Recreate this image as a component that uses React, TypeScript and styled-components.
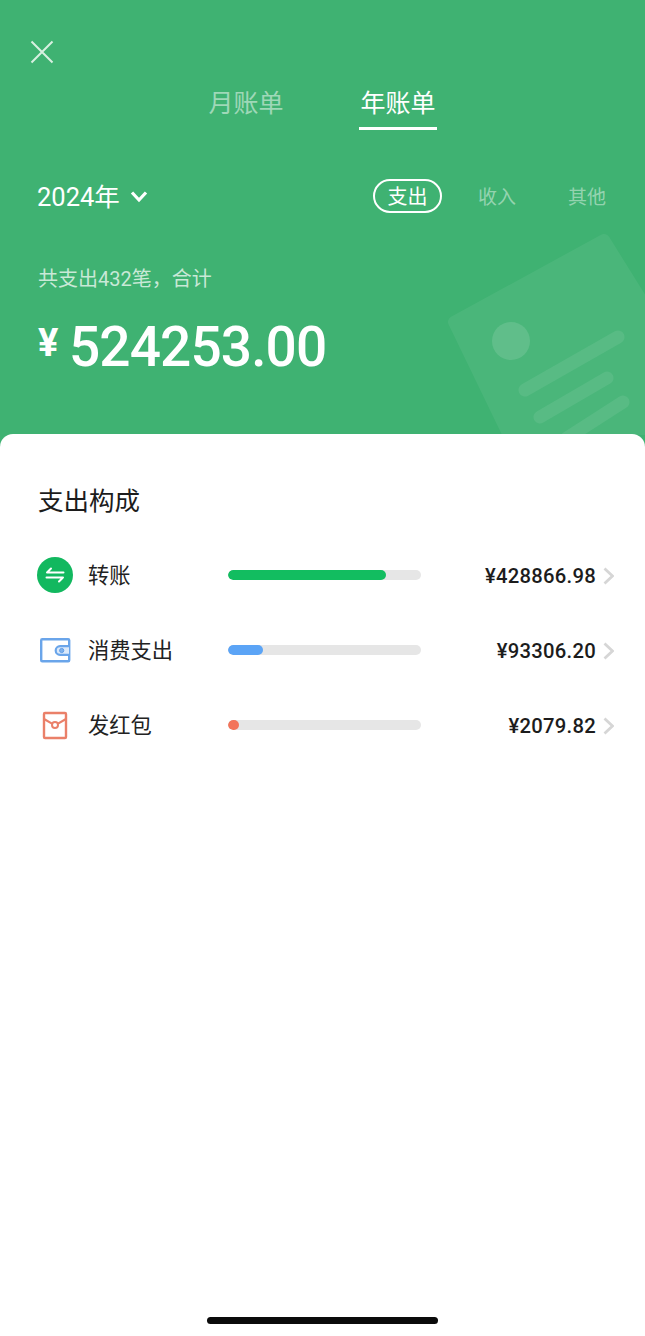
import React, { FunctionComponent } from 'react';
import styled, { createGlobalStyle } from 'styled-components';

const GlobalStyle = createGlobalStyle`
  html, body {
    margin: 0;
    padding: 0;
    background: #fff;
  }
  body {
    font-family: "Noto Sans CJK SC", "Noto Sans", sans-serif;
  }
`;

const Page = styled.div`
  width: 645px;
  height: 1336px;
  display: flex;
  flex-direction: column;
  overflow: hidden;
  background: #3fb272;
`;

const Header = styled.header`
  position: relative;
  height: 435px;
  flex: none;
  box-sizing: border-box;
  padding: 40px 38px 0 37px;
  color: #fff;
  overflow: hidden;
`;

const Decoration = styled.svg`
  position: absolute;
  left: 0;
  top: 0;
  pointer-events: none;
`;

const CloseButton = styled.div`
  width: 24px;
  height: 24px;
  margin-left: -7px;
  line-height: 0;
`;

const Tabs = styled.div`
  display: flex;
  justify-content: center;
  gap: 75px;
  margin: 14px -1px 0 0;
  height: 52px;
`;

const Tab = styled.div<{ $active?: boolean }>`
  width: ${p => (p.$active ? '78px' : '76px')};
  height: 52px;
  box-sizing: border-box;
  font-size: 25px;
  line-height: 46px;
  text-align: center;
  white-space: nowrap;
  color: ${p => (p.$active ? '#fff' : 'rgba(255, 255, 255, 0.5)')};
  border-bottom: 3px solid ${p => (p.$active ? '#fff' : 'transparent')};
`;

const FilterRow = styled.div`
  display: flex;
  align-items: center;
  justify-content: space-between;
  height: 34px;
  margin-top: 49px;
`;

const YearPicker = styled.div`
  display: flex;
  align-items: center;
  gap: 10px;
  font-size: 25.5px;
  line-height: 30px;
  height: 34px;
`;

const YearDigits = styled.span`
  font-family: "Roboto", "Noto Sans CJK SC", sans-serif;
`;

const Kinds = styled.div`
  display: flex;
  align-items: center;
  margin-right: 1px;
`;

const ActiveKind = styled.div`
  box-sizing: border-box;
  width: 69px;
  height: 34px;
  font-size: 20px;
  line-height: 30px;
  text-align: center;
  color: #fff;
  border: 2px solid #fff;
  border-radius: 17px;
`;

const PlainKind = styled.div`
  height: 34px;
  margin-left: 36px;
  font-size: 19px;
  line-height: 34px;
  color: rgba(255, 255, 255, 0.45);
  & + & {
    margin-left: 52px;
  }
`;

const Summary = styled.div`
  margin: 51px 0 0 1px;
  font-size: 20px;
  line-height: 30px;
  color: rgba(255, 255, 255, 0.72);
  font-family: "Roboto", "Noto Sans CJK SC", sans-serif;
`;

const Amount = styled.div`
  display: flex;
  align-items: flex-start;
  margin: 23px 0 0 1px;
  font-family: "Roboto", sans-serif;
  font-weight: 500;
  color: #fff;
`;

const Currency = styled.span`
  font-size: 38px;
  line-height: 52px;
  width: 31px;
  font-weight: 700;
`;

const AmountValue = styled.span`
  font-size: 55px;
  line-height: 60px;
  letter-spacing: -0.9px;
`;

const Sheet = styled.main`
  flex: 1;
  display: flex;
  flex-direction: column;
  background: #fff;
  border-radius: 13px 13px 0 0;
  margin-top: -1px;
  padding: 0 0 12px;
`;

const SheetTitle = styled.h2`
  margin: 47px 0 0 38px;
  font-size: 25.5px;
  line-height: 36px;
  font-weight: 400;
  color: #1c1c1c;
`;

const Rows = styled.div`
  display: flex;
  flex-direction: column;
  margin-top: 20px;
`;

const Row = styled.div`
  display: grid;
  grid-template-columns: 51px 140px 193px 175px 18px;
  align-items: center;
  height: 75px;
  padding-left: 37px;
`;

const IconCell = styled.div`
  width: 36px;
  height: 36px;
  line-height: 0;
`;

const Label = styled.div`
  font-size: 21.25px;
  line-height: 30px;
  padding-bottom: 2px;
  color: #222;
  white-space: nowrap;
`;

const BarTrack = styled.div`
  height: 10px;
  background: #e6e6e6;
  border-radius: 5px;
  overflow: hidden;
`;

const BarFill = styled.div<{ $color: string }>`
  height: 100%;
  background: ${p => p.$color};
  border-radius: 5px;
`;

const Value = styled.div`
  font-family: "Roboto", sans-serif;
  font-size: 20.25px;
  line-height: 30px;
  padding-top: 2px;
  font-weight: 500;
  text-align: right;
  color: #1c1c1c;
  letter-spacing: 0.25px;
`;

const Chevron = styled.div`
  line-height: 0;
  padding: 2px 0 0 7px;
`;

const HomeIndicator = styled.div`
  width: 231px;
  height: 7px;
  margin: auto auto 0;
  background: #0a0a0a;
  border-radius: 4px;
`;

const TransferIcon = () => (
  <svg width="36" height="36" viewBox="0 0 36 36">
    <circle cx="18" cy="18" r="18" fill="#12b85f" />
    <path d="M10 15.5h16.5M14 11.5l-4 4M9.5 20.5h16.5M26 20.5l-4 4" stroke="#fff" strokeWidth="2" fill="none" strokeLinecap="round" />
  </svg>
);

const WalletIcon = () => (
  <svg width="36" height="36" viewBox="0 0 36 36">
    <rect x="4.2" y="7.2" width="28" height="22" rx="1" fill="none" stroke="#6aa5ea" strokeWidth="2.4" />
    <path d="M32 14.2h-9a4 4 0 0 0 0 8.6h9" fill="#dbe9fa" stroke="#6aa5ea" strokeWidth="2.2" />
    <circle cx="24.7" cy="18.5" r="2.1" fill="#7fb1ec" stroke="#5f9de6" strokeWidth="1" />
  </svg>
);

const RedPacketIcon = () => (
  <svg width="36" height="36" viewBox="0 0 36 36">
    <rect x="7" y="6" width="22" height="25" rx="1" fill="none" stroke="#ea8069" strokeWidth="2.4" />
    <path d="M7 12l8 4.6M29 12l-8 4.6" fill="none" stroke="#ea8069" strokeWidth="2.2" />
    <circle cx="18" cy="18" r="3" fill="none" stroke="#ea8069" strokeWidth="2" />
  </svg>
);

const RowChevron = () => (
  <svg width="11" height="18" viewBox="0 0 11 18">
    <path d="M1.5 1.5L9.5 9l-8 7.5" fill="none" stroke="#d6d6d6" strokeWidth="2.8" />
  </svg>
);

interface Expense {
  label: string;
  amount: string;
  percent: number;
  color: string;
  icon: React.ReactNode;
}

const expenses: Expense[] = [
  { label: '转账', amount: '¥428866.98', percent: 82, color: '#12bd60', icon: <TransferIcon /> },
  { label: '消费支出', amount: '¥93306.20', percent: 18, color: '#5ba4f6', icon: <WalletIcon /> },
  { label: '发红包', amount: '¥2079.82', percent: 5.5, color: '#f2745a', icon: <RedPacketIcon /> },
];

const App: FunctionComponent = () => (
  <Page>
    <GlobalStyle />
    <Header>
      <Decoration width="645" height="435" viewBox="0 0 645 435">
        <g opacity="0.055">
          <path
            d="M454 322L604 240L660 330L660 450L516 450Z"
            fill="#fff"
            stroke="#fff"
            strokeWidth="12"
            strokeLinejoin="round"
          />
        </g>
        <circle cx="511" cy="341" r="19" fill="#fff" fillOpacity="0.12" />
        <path
          d="M525 390L618 337M540 417L607 378M567 438L623 402"
          stroke="#fff"
          strokeOpacity="0.08"
          strokeWidth="13"
          strokeLinecap="round"
        />
      </Decoration>
      <CloseButton>
        <svg width="24" height="24" viewBox="0 0 24 24">
          <path d="M1.5 1.5l21 21M22.5 1.5l-21 21" stroke="#d8f0e1" strokeWidth="2" fill="none" />
        </svg>
      </CloseButton>
      <Tabs>
        <Tab>月账单</Tab>
        <Tab $active>年账单</Tab>
      </Tabs>
      <FilterRow>
        <YearPicker>
          <span>
            <YearDigits>2024</YearDigits>年
          </span>
          <svg width="18" height="13" viewBox="0 0 18 13">
            <path d="M2 2.5l7 7.5 7-7.5" stroke="#fff" strokeWidth="3.2" fill="none" />
          </svg>
        </YearPicker>
        <Kinds>
          <ActiveKind>支出</ActiveKind>
          <PlainKind>收入</PlainKind>
          <PlainKind>其他</PlainKind>
        </Kinds>
      </FilterRow>
      <Summary>共支出432笔，合计</Summary>
      <Amount>
        <Currency>¥</Currency>
        <AmountValue>524253.00</AmountValue>
      </Amount>
    </Header>
    <Sheet>
      <SheetTitle>支出构成</SheetTitle>
      <Rows>
        {expenses.map(e => (
          <Row key={e.label}>
            <IconCell>{e.icon}</IconCell>
            <Label>{e.label}</Label>
            <BarTrack>
              <BarFill $color={e.color} style={{ width: `${e.percent}%` }} />
            </BarTrack>
            <Value>{e.amount}</Value>
            <Chevron>
              <RowChevron />
            </Chevron>
          </Row>
        ))}
      </Rows>
      <HomeIndicator />
    </Sheet>
  </Page>
);

export default App;
